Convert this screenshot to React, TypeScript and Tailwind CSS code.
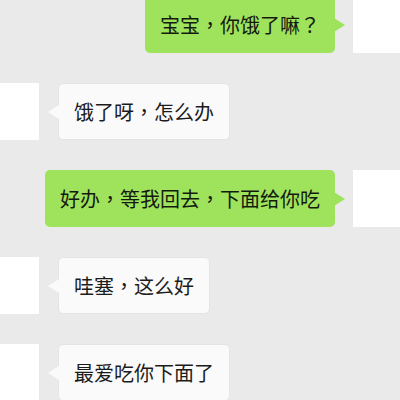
const messages: { side: "left" | "right"; text: string }[] = [
  { side: "right", text: "宝宝，你饿了嘛？" },
  { side: "left", text: "饿了呀，怎么办" },
  { side: "right", text: "好办，等我回去，下面给你吃" },
  { side: "left", text: "哇塞，这么好" },
  { side: "left", text: "最爱吃你下面了" },
];

// punctuation sits centred in the reference, like the TC cut
function Text({ text }: { text: string }) {
  return (
    <span className="text-[20px] leading-none whitespace-nowrap">
      {Array.from(text).map((ch, i) =>
        ch === "，" || ch === "？" ? (
          <span key={i} style={{ fontFamily: '"Noto Sans CJK TC", sans-serif' }}>
            {ch}
          </span>
        ) : (
          <span key={i}>{ch}</span>
        )
      )}
    </span>
  );
}

function Bubble({ side, text }: { side: "left" | "right"; text: string }) {
  const mine = side === "right";
  return (
    <div className="relative">
      <div
        className={
          mine
            ? "h-[57px] flex items-center px-[15px] rounded-[5px] bg-[#9fe35c] text-[#141a10]"
            : "h-[57px] flex items-center px-[15px] rounded-[5px] bg-[#fafafa] border border-[#e4e4e4] text-[#1c1c1c]"
        }
      >
        <Text text={text} />
      </div>
      {mine ? (
        <div className="absolute top-1/2 -translate-y-1/2 right-[-10px] w-0 h-0 border-y-[7px] border-y-transparent border-l-[11px] border-l-[#9fe35c]" />
      ) : (
        <div className="absolute top-1/2 -translate-y-1/2 left-[-10px] w-0 h-0 border-y-[7px] border-y-transparent border-r-[11px] border-r-[#fafafa]" />
      )}
    </div>
  );
}

export default function App() {
  return (
    <div
      className="w-[400px] h-[400px] overflow-hidden bg-[#eaeaea]"
      style={{ fontFamily: '"Noto Sans CJK SC", "Noto Sans", sans-serif' }}
    >
      <div className="flex flex-col gap-[30px] mt-[-4px]">
        {messages.map((m, i) =>
          m.side === "right" ? (
            <div key={i} className="flex justify-end items-start gap-[18px] mr-[-11px]">
              <Bubble side="right" text={m.text} />
              <div className="w-[58px] h-[57px] bg-white shrink-0" />
            </div>
          ) : (
            <div key={i} className="flex items-start gap-[19px] ml-[-19px]">
              <div className="w-[58px] h-[57px] bg-white shrink-0" />
              <Bubble side="left" text={m.text} />
            </div>
          )
        )}
      </div>
    </div>
  );
}
